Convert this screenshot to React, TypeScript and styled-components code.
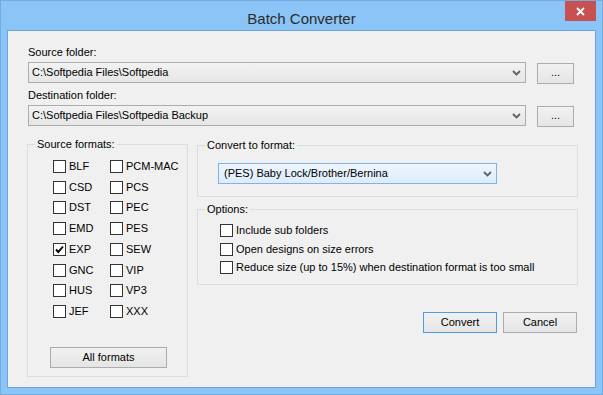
import React from "react";
import styled, { createGlobalStyle } from "styled-components";

const GlobalStyle = createGlobalStyle`
  html, body {
    margin: 0;
    padding: 0;
    background: #8bc4f6;
  }
  body {
    font-family: "Liberation Sans", Arial, sans-serif;
    font-size: 11px;
    color: #000;
  }
`;

const Window = styled.div`
  width: 603px;
  height: 395px;
  box-sizing: border-box;
  background: #8bc4f6;
  border: 1px solid #74acdf;
  display: flex;
  flex-direction: column;
`;

const TitleBar = styled.div`
  height: 29px;
  flex: none;
  display: grid;
  grid-template-columns: 1fr auto 1fr;
  align-items: start;
  padding: 0 6px;
`;

const Title = styled.div`
  grid-column: 2;
  padding-top: 9px;
  font-size: 15px;
  line-height: 17px;
  color: #2b2b2b;
`;

const CloseButton = styled.div`
  grid-column: 3;
  justify-self: end;
  width: 31px;
  height: 20px;
  background: #c75050;
  display: flex;
  align-items: center;
  justify-content: center;
`;

const Client = styled.div`
  flex: 1;
  margin: 0 6px 6px 6px;
  background: #f0f0f0;
  border: 1px solid #6fa5d8;
  padding: 14px 0 0 19px;
`;

const FolderBlock = styled.div`
  margin-left: 1px;
`;

const FieldLabel = styled.div<{ $top?: number }>`
  line-height: 15px;
  margin-top: ${(p) => p.$top ?? 0}px;
  margin-bottom: 2px;
`;

const FolderRow = styled.div`
  display: flex;
  align-items: flex-start;
  gap: 11px;
`;

const Combo = styled.div<{ $width: number; $focused?: boolean }>`
  width: ${(p) => p.$width}px;
  height: 21px;
  box-sizing: border-box;
  border: 1px solid ${(p) => (p.$focused ? "#7eb4ea" : "#acacac")};
  background: ${(p) =>
    p.$focused
      ? "linear-gradient(#edf5fd, #dcecfc)"
      : "linear-gradient(#f2f2f2, #e6e6e6)"};
  display: flex;
  align-items: center;
  justify-content: space-between;
  padding: 0 4px 0 ${(p) => (p.$focused ? 5 : 3)}px;
  line-height: 13px;
`;

const PushButton = styled.div<{ $width: number; $primary?: boolean }>`
  width: ${(p) => p.$width}px;
  height: 21px;
  box-sizing: border-box;
  border: 1px solid ${(p) => (p.$primary ? "#4d9ae6" : "#acacac")};
  background: linear-gradient(#f1f1f1, #e5e5e5);
  display: flex;
  align-items: center;
  justify-content: center;
  line-height: 13px;
  flex: none;
`;

const BrowseButton = styled(PushButton)`
  margin-top: 1px;
  padding-bottom: 3px;
`;

const Lower = styled.div`
  display: flex;
  gap: 9px;
  margin-top: 10px;
`;

const GroupBox = styled.fieldset<{ $width?: number; $height: number }>`
  margin: 0;
  padding: 0;
  min-width: 0;
  box-sizing: border-box;
  width: ${(p) => (p.$width ? `${p.$width}px` : "auto")};
  height: ${(p) => p.$height}px;
  border: 1px solid #dcdcdc;
`;

const Legend = styled.legend`
  margin-left: 7px;
  padding: 0 2px;
  line-height: 14px;
`;

const FormatGrid = styled.div`
  display: grid;
  grid-template-columns: 57px 57px;
  grid-auto-rows: 13px;
  row-gap: 7.71px;
  margin: 9px 0 0 25px;
`;

const CheckRow = styled.div`
  display: flex;
  align-items: center;
  gap: 3px;
  line-height: 13px;
  height: 13px;
  white-space: nowrap;
`;

const Box = styled.span`
  width: 13px;
  height: 13px;
  box-sizing: border-box;
  border: 1px solid #333;
  background: #fff;
  display: flex;
  align-items: center;
  justify-content: center;
  flex: none;
`;

const AllFormats = styled(PushButton)`
  margin: 29px 0 0 22px;
`;

const RightColumn = styled.div`
  width: 381px;
  margin-top: 1px;
  display: flex;
  flex-direction: column;
`;

const FormatCombo = styled(Combo)`
  margin: 11px 0 0 20px;
`;

const OptionList = styled.div`
  display: flex;
  flex-direction: column;
  gap: 5.5px;
  margin: 8px 0 0 22px;
`;

const ButtonRow = styled.div`
  display: flex;
  justify-content: flex-end;
  gap: 6px;
  margin-top: 27px;
  padding-right: 1px;
`;

const Chevron = () => (
  <svg width="9" height="6" viewBox="0 0 9 6">
    <path d="M1 1 L4.5 4.5 L8 1" fill="none" stroke="#606060" strokeWidth="1.8" />
  </svg>
);

const CloseGlyph = () => (
  <svg width="9" height="9" viewBox="0 0 9 9">
    <path d="M1 1 L8 8 M8 1 L1 8" stroke="#fff" strokeWidth="1.8" />
  </svg>
);

const CheckMark = () => (
  <svg width="11" height="11" viewBox="0 0 11 11">
    <path d="M2 5.5 L4.3 8 L9 2.5" fill="none" stroke="#000" strokeWidth="1.9" />
  </svg>
);

function CheckBox({ label, checked }: { label: string; checked?: boolean }) {
  return (
    <CheckRow>
      <Box>{checked && <CheckMark />}</Box>
      <span>{label}</span>
    </CheckRow>
  );
}

const formats = [
  ["BLF", "PCM-MAC"],
  ["CSD", "PCS"],
  ["DST", "PEC"],
  ["EMD", "PES"],
  ["EXP", "SEW"],
  ["GNC", "VIP"],
  ["HUS", "VP3"],
  ["JEF", "XXX"],
];

const options = [
  "Include sub folders",
  "Open designs on size errors",
  "Reduce size (up to 15%) when destination format is too small",
];

export default function App() {
  return (
    <>
      <GlobalStyle />
      <Window>
        <TitleBar>
          <Title>Batch Converter</Title>
          <CloseButton>
            <CloseGlyph />
          </CloseButton>
        </TitleBar>
        <Client>
          <FolderBlock>
            <FieldLabel>Source folder:</FieldLabel>
            <FolderRow>
              <Combo $width={498}>
                <span>C:\Softpedia Files\Softpedia</span>
                <Chevron />
              </Combo>
              <BrowseButton $width={37}>...</BrowseButton>
            </FolderRow>
            <FieldLabel $top={4}>Destination folder:</FieldLabel>
            <FolderRow>
              <Combo $width={498}>
                <span>C:\Softpedia Files\Softpedia Backup</span>
                <Chevron />
              </Combo>
              <BrowseButton $width={37}>...</BrowseButton>
            </FolderRow>
          </FolderBlock>

          <Lower>
            <GroupBox $width={161} $height={240}>
              <Legend>Source formats:</Legend>
              <FormatGrid>
                {formats.flatMap(([a, b]) => [
                  <CheckBox key={a} label={a} checked={a === "EXP"} />,
                  <CheckBox key={b} label={b} />,
                ])}
              </FormatGrid>
              <AllFormats $width={117}>All formats</AllFormats>
            </GroupBox>

            <RightColumn>
              <GroupBox $height={59}>
                <Legend>Convert to format:</Legend>
                <FormatCombo $width={279} $focused>
                  <span>(PES) Baby Lock/Brother/Bernina</span>
                  <Chevron />
                </FormatCombo>
              </GroupBox>
              <GroupBox $height={83} style={{ marginTop: 5 }}>
                <Legend>Options:</Legend>
                <OptionList>
                  {options.map((o) => (
                    <CheckBox key={o} label={o} />
                  ))}
                </OptionList>
              </GroupBox>
              <ButtonRow>
                <PushButton $width={74} $primary>
                  Convert
                </PushButton>
                <PushButton $width={74}>Cancel</PushButton>
              </ButtonRow>
            </RightColumn>
          </Lower>
        </Client>
      </Window>
    </>
  );
}
